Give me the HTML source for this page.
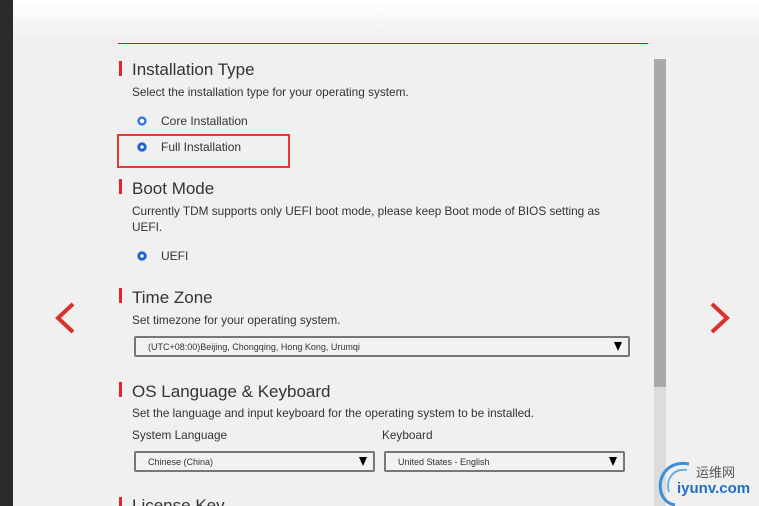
<!DOCTYPE html>
<html><head><meta charset="utf-8"><style>
*{margin:0;padding:0;box-sizing:border-box}
html,body{width:759px;height:506px;overflow:hidden}
body{background:#f0f0f0;font-family:"Liberation Sans","DejaVu Sans",sans-serif;color:#333;position:relative}
.dark{position:absolute;left:0;top:0;width:13px;height:506px;background:#2b2b2b}
.topg{position:absolute;left:13px;top:0;right:0;height:40px;background:linear-gradient(#fff,#f0f0f0)}
.line{position:absolute;left:118px;top:43px;width:530px;height:1px;background:#e01010}
.a{position:absolute;white-space:nowrap}
.h{font-size:17px;color:#333}
.bar{position:absolute;left:119px;width:3px;height:15px;background:#e8212e}
.d{font-size:11.8px;color:#333}
.o{font-size:12px;color:#333}
.r{position:absolute;width:10px;height:10px;border-radius:50%;background:radial-gradient(circle,#fff 0 2px,#2a72d8 2.5px 4px,#9cc0ef 4.5px)}
.r.f{background:radial-gradient(circle,#fff 0 1.5px,#1d5fc4 2px 4px,#7aa6e4 4.5px)}
.sel{position:absolute;height:21px;border:2px solid #777;border-radius:2px;background:#f2f2f2;font-size:9px;color:#333;padding:4px 0 0 12px}
.sel i{position:absolute;right:6px;top:4px;width:0;height:0;border-left:4.5px solid transparent;border-right:4.5px solid transparent;border-top:9px solid #000}
.redbox{position:absolute;left:117px;top:134px;width:173px;height:34px;border:2px solid #e53935}
.sb{position:absolute;left:654px;top:59px;width:12px;height:447px;background:#dcdcdc}
.th{position:absolute;left:654px;top:59px;width:12px;height:328px;background:#a9a9a9}
</style></head><body>
<div class="dark"></div><div class="topg"></div>
<div class="line"></div>

<div class="bar" style="top:61px"></div>
<div class="a h" style="left:132px;top:60px">Installation Type</div>
<div class="a d" style="left:132px;top:85px">Select the installation type for your operating system.</div>
<div class="r" style="left:137px;top:116px"></div>
<div class="a o" style="left:161px;top:114px">Core Installation</div>
<div class="r f" style="left:137px;top:142px"></div>
<div class="a o" style="left:161px;top:140px">Full Installation</div>
<div class="redbox"></div>

<div class="bar" style="top:179px"></div>
<div class="a h" style="left:132px;top:179px">Boot Mode</div>
<div class="a d" style="left:132px;top:204px">Currently TDM supports only UEFI boot mode, please keep Boot mode of BIOS setting as</div>
<div class="a d" style="left:132px;top:220px">UEFI.</div>
<div class="r f" style="left:137px;top:251px"></div>
<div class="a o" style="left:161px;top:249px">UEFI</div>

<div class="bar" style="top:288px"></div>
<div class="a h" style="left:132px;top:288px">Time Zone</div>
<div class="a d" style="left:132px;top:313px">Set timezone for your operating system.</div>
<div class="sel" style="left:134px;top:336px;width:496px">(UTC+08:00)Beijing, Chongqing, Hong Kong, Urumqi<i></i></div>

<div class="bar" style="top:382px"></div>
<div class="a h" style="left:132px;top:382px">OS Language &amp; Keyboard</div>
<div class="a d" style="left:132px;top:406px">Set the language and input keyboard for the operating system to be installed.</div>
<div class="a d" style="left:132px;top:428px">System Language</div>
<div class="a d" style="left:382px;top:428px">Keyboard</div>
<div class="sel" style="left:134px;top:451px;width:241px">Chinese (China)<i></i></div>
<div class="sel" style="left:384px;top:451px;width:241px">United States - English<i></i></div>

<div class="bar" style="top:497px"></div>
<div class="a h" style="left:132px;top:496px">License Key</div>

<div class="sb"></div><div class="th"></div>

<svg class="a" style="left:53px;top:302px" width="24" height="32" viewBox="0 0 24 32"><path d="M20 2 L5 16 L20 30" fill="none" stroke="#d9322a" stroke-width="4"/></svg>
<svg class="a" style="left:708px;top:302px" width="24" height="32" viewBox="0 0 24 32"><path d="M4 2 L19 16 L4 30" fill="none" stroke="#d9322a" stroke-width="4"/></svg>

<svg class="a" style="left:655px;top:458px" width="40" height="48" viewBox="0 0 40 48"><path d="M34 6 C14 2 2 18 6 34 C8 42 14 46 20 47" fill="none" stroke="#3a8fd8" stroke-width="3"/><path d="M32 12 C18 10 10 22 14 34" fill="none" stroke="#6ab0e8" stroke-width="2"/></svg>
<div class="a" style="left:696px;top:462px;font-size:13px;color:#555;font-family:'Liberation Sans','Noto Sans CJK SC',sans-serif">运维网</div>
<div class="a" style="left:677px;top:480px;font-size:15px;font-weight:bold;color:#1f6fc4">iyunv.com</div>
</body></html>
